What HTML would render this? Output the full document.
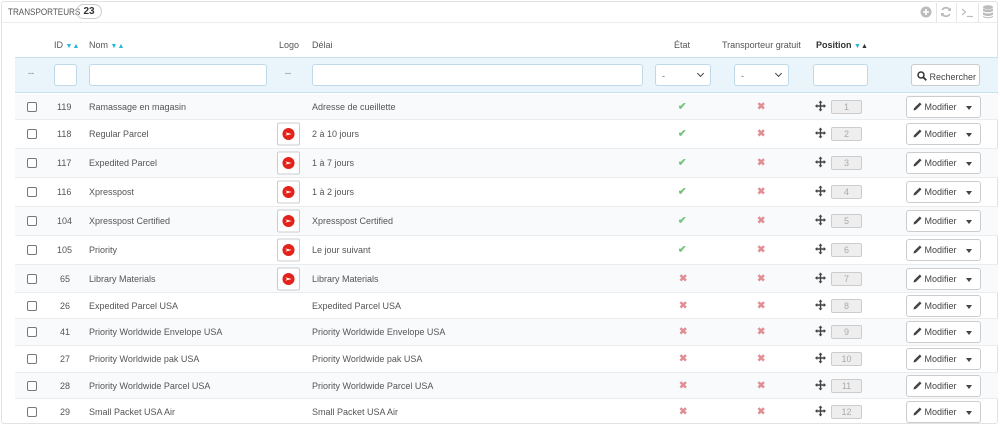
<!DOCTYPE html>
<html><head><meta charset="utf-8"><style>
*{box-sizing:border-box;margin:0;padding:0}
body{width:1000px;height:435px;background:#fff;font-family:"Liberation Sans",sans-serif;font-size:9px;color:#555;position:relative;overflow:hidden}
.a{position:absolute}
.panel{left:1px;top:1px;width:997px;height:423px;border:1px solid #dfe3e6;border-radius:3px}
.hdr{left:8px;top:7px;font-size:9px;color:#555;transform:scaleX(.9);transform-origin:left}
.badge{left:76px;top:4px;width:26px;height:15px;border:1px solid #ccc;border-radius:8px;font-size:10px;font-weight:bold;color:#333;text-align:center;line-height:13px}
.hline{left:2px;top:22px;width:996px;height:1px;background:#eaedef}
.th{top:40px;font-size:9px;color:#555}
.tri{font-size:7px;color:#25b9d7}
.filter{left:15px;top:57px;width:983px;height:36px;background:#eaf5fb;border-top:1px solid #c8e1ee;border-bottom:1px solid #c8e1ee}
.inp{position:absolute;top:6px;height:22px;background:#fff;border:1px solid #bfd9e8;border-radius:3px}
.sel{font-size:9px;padding:6px 0 0 6px;color:#666}
.sel:after{content:"";position:absolute;right:7px;top:6px;width:4px;height:4px;border-right:1.5px solid #444;border-bottom:1.5px solid #444;transform:rotate(45deg)}
.btn{position:absolute;background:#fff;border:1px solid #ccc;border-radius:3px;color:#444;font-size:9px}
.row{position:absolute;left:15px;width:983px;border-bottom:1px solid #eaedef}
.row.o{background:#f8fafc}
.row span{position:absolute;top:50%;transform:translateY(-50%);white-space:nowrap}
.cb{left:12px;width:10px;height:10px;border:1px solid #777;border-radius:2px;background:#fff}
.logo{left:262px;width:23px;height:23px;border:1px solid #ccc;border-radius:2px;background:#fff}
.logo svg{position:absolute;left:4px;top:4px}
.ok{color:#72c279;font-size:10px;font-weight:bold}
.no{color:#e08f95;font-size:10px;font-weight:bold}
.pos{left:816px;width:31px;height:14px;border:1px solid #ccc;background:#eee;border-radius:2px;color:#aaa;text-align:center;line-height:12px;font-size:9px}
.mv{left:800px}
.mod{left:891px;width:75px;height:22px;border:1px solid #ccc;border-radius:3px;background:#fff}
.mod b{position:absolute;left:6px;top:5px;font-weight:normal;color:#444;font-size:9px}
.mod b svg{vertical-align:-1px}
.mod em{position:absolute;right:8px;top:9px;width:0;height:0;border-left:3.5px solid transparent;border-right:3.5px solid transparent;border-top:4px solid #444}
</style></head><body>
<svg width="0" height="0" style="position:absolute"><defs>
<symbol id="lg" viewBox="0 0 14 14"><circle cx="7" cy="7" r="6.5" fill="#e3231b"/><path d="M3.5 5.2 L10.5 7 L3.5 8.8 L5.5 7 Z" fill="#fff"/></symbol>
<symbol id="mvi" viewBox="0 0 12 12"><path d="M6 0 L8.2 2.5 H6.8 V5.2 H9.5 V3.8 L12 6 L9.5 8.2 V6.8 H6.8 V9.5 H8.2 L6 12 L3.8 9.5 H5.2 V6.8 H2.5 V8.2 L0 6 L2.5 3.8 V5.2 H5.2 V2.5 H3.8 Z" fill="#444"/></symbol>
<symbol id="pen" viewBox="0 0 10 10"><path d="M7.5 0.5 L9.5 2.5 L3.2 8.8 L0.5 9.5 L1.2 6.8 Z" fill="#444"/></symbol>
</defs></svg>
<div class="a panel"></div>
<div class="a hdr">TRANSPORTEURS</div>
<div class="a badge">23</div>
<div class="a hline"></div>
<div class="a" style="left:916px;top:3px;width:82px;height:19px">
<svg class="a" style="left:4px;top:3px" width="12" height="12" viewBox="0 0 12 12"><circle cx="6" cy="6" r="5.5" fill="#bbb"/><path d="M6 3v6M3 6h6" stroke="#fff" stroke-width="1.6"/></svg>
<span class="a" style="left:20px;top:0;border-left:1px solid #e5e5e5;height:19px"></span>
<svg class="a" style="left:24px;top:3px" width="12" height="12" viewBox="0 0 12 12"><path d="M10 4.5A4.3 4.3 0 0 0 2.2 4M2 7.5A4.3 4.3 0 0 0 9.8 8" stroke="#bbb" stroke-width="1.8" fill="none"/><path d="M11 1.5V5H7.5Z M1 10.5V7H4.5Z" fill="#bbb"/></svg>
<span class="a" style="left:40px;top:0;border-left:1px solid #e5e5e5;height:19px"></span>
<svg class="a" style="left:45px;top:4px" width="13" height="11" viewBox="0 0 13 11"><path d="M1 2L4.5 5L1 8" stroke="#bbb" stroke-width="1.2" fill="none"/><path d="M6 9.5H12" stroke="#bbb" stroke-width="1.2"/></svg>
<span class="a" style="left:62px;top:0;border-left:1px solid #e5e5e5;height:19px"></span>
<svg class="a" style="left:67px;top:2px" width="10" height="14" viewBox="0 0 10 14"><ellipse cx="5" cy="2.2" rx="5" ry="2" fill="#bbb"/><path d="M0 3.5Q5 6 10 3.5V6Q5 8.5 0 6Z M0 7.3Q5 9.8 10 7.3V9.8Q5 12.3 0 9.8Z M0 11Q5 13.5 10 11V12Q5 14.5 0 12Z" fill="#bbb"/></svg>
</div>
<div class="a th" style="left:54px">ID <span class="tri">&#9660;&#9650;</span></div>
<div class="a th" style="left:89px">Nom <span class="tri">&#9660;&#9650;</span></div>
<div class="a th" style="left:279px">Logo</div>
<div class="a th" style="left:312px">Délai</div>
<div class="a th" style="left:674px">État</div>
<div class="a th" style="left:722px">Transporteur gratuit</div>
<div class="a th" style="left:816px;font-weight:bold;color:#333">Position <span class="tri">&#9660;</span><span style="font-size:7px;color:#333">&#9650;</span></div>
<div class="a filter">
<span style="position:absolute;left:13px;top:10px;color:#777">--</span>
<div class="inp" style="left:39px;width:23px"></div>
<div class="inp" style="left:74px;width:178px"></div>
<span style="position:absolute;left:270px;top:10px;color:#777">--</span>
<div class="inp" style="left:297px;width:331px"></div>
<div class="inp sel" style="left:640px;width:56px">-</div>
<div class="inp sel" style="left:719px;width:55px">-</div>
<div class="inp" style="left:798px;width:55px"></div>
<div class="btn" style="left:896px;top:6px;width:69px;height:22px;padding:6px 0 0 5px"><svg width="10" height="10" viewBox="0 0 10 10" style="vertical-align:-1px"><circle cx="4" cy="4" r="3" stroke="#333" stroke-width="1.5" fill="none"/><path d="M6.2 6.2L9.3 9.3" stroke="#333" stroke-width="1.8"/></svg> Rechercher</div>
</div>
<div class="row o" style="top:94px;height:26px"><span class="cb"></span><span style="left:42px">119</span><span style="left:74px">Ramassage en magasin</span><span style="left:297px">Adresse de cueillette</span><span class="ok" style="left:663px">&#10004;</span><span class="no" style="left:742px">&#10006;</span><span class="mv"><svg width="11" height="11"><use href="#mvi"/></svg></span><span class="pos">1</span><span class="mod"><b><svg width="9" height="9"><use href="#pen"/></svg> Modifier</b><em></em></span></div>
<div class="row" style="top:120px;height:29px"><span class="cb"></span><span style="left:42px">118</span><span style="left:74px">Regular Parcel</span><span class="logo"><svg width="13" height="13"><use href="#lg"/></svg></span><span style="left:297px">2 à 10 jours</span><span class="ok" style="left:663px">&#10004;</span><span class="no" style="left:742px">&#10006;</span><span class="mv"><svg width="11" height="11"><use href="#mvi"/></svg></span><span class="pos">2</span><span class="mod"><b><svg width="9" height="9"><use href="#pen"/></svg> Modifier</b><em></em></span></div>
<div class="row o" style="top:149px;height:29px"><span class="cb"></span><span style="left:42px">117</span><span style="left:74px">Expedited Parcel</span><span class="logo"><svg width="13" height="13"><use href="#lg"/></svg></span><span style="left:297px">1 à 7 jours</span><span class="ok" style="left:663px">&#10004;</span><span class="no" style="left:742px">&#10006;</span><span class="mv"><svg width="11" height="11"><use href="#mvi"/></svg></span><span class="pos">3</span><span class="mod"><b><svg width="9" height="9"><use href="#pen"/></svg> Modifier</b><em></em></span></div>
<div class="row" style="top:178px;height:29px"><span class="cb"></span><span style="left:42px">116</span><span style="left:74px">Xpresspost</span><span class="logo"><svg width="13" height="13"><use href="#lg"/></svg></span><span style="left:297px">1 à 2 jours</span><span class="ok" style="left:663px">&#10004;</span><span class="no" style="left:742px">&#10006;</span><span class="mv"><svg width="11" height="11"><use href="#mvi"/></svg></span><span class="pos">4</span><span class="mod"><b><svg width="9" height="9"><use href="#pen"/></svg> Modifier</b><em></em></span></div>
<div class="row o" style="top:207px;height:29px"><span class="cb"></span><span style="left:42px">104</span><span style="left:74px">Xpresspost Certified</span><span class="logo"><svg width="13" height="13"><use href="#lg"/></svg></span><span style="left:297px">Xpresspost Certified</span><span class="ok" style="left:663px">&#10004;</span><span class="no" style="left:742px">&#10006;</span><span class="mv"><svg width="11" height="11"><use href="#mvi"/></svg></span><span class="pos">5</span><span class="mod"><b><svg width="9" height="9"><use href="#pen"/></svg> Modifier</b><em></em></span></div>
<div class="row" style="top:236px;height:29px"><span class="cb"></span><span style="left:42px">105</span><span style="left:74px">Priority</span><span class="logo"><svg width="13" height="13"><use href="#lg"/></svg></span><span style="left:297px">Le jour suivant</span><span class="ok" style="left:663px">&#10004;</span><span class="no" style="left:742px">&#10006;</span><span class="mv"><svg width="11" height="11"><use href="#mvi"/></svg></span><span class="pos">6</span><span class="mod"><b><svg width="9" height="9"><use href="#pen"/></svg> Modifier</b><em></em></span></div>
<div class="row o" style="top:265px;height:28px"><span class="cb"></span><span style="left:45px">65</span><span style="left:74px">Library Materials</span><span class="logo"><svg width="13" height="13"><use href="#lg"/></svg></span><span style="left:297px">Library Materials</span><span class="no" style="left:664px">&#10006;</span><span class="no" style="left:742px">&#10006;</span><span class="mv"><svg width="11" height="11"><use href="#mvi"/></svg></span><span class="pos">7</span><span class="mod"><b><svg width="9" height="9"><use href="#pen"/></svg> Modifier</b><em></em></span></div>
<div class="row" style="top:293px;height:26px"><span class="cb"></span><span style="left:45px">26</span><span style="left:74px">Expedited Parcel USA</span><span style="left:297px">Expedited Parcel USA</span><span class="no" style="left:664px">&#10006;</span><span class="no" style="left:742px">&#10006;</span><span class="mv"><svg width="11" height="11"><use href="#mvi"/></svg></span><span class="pos">8</span><span class="mod"><b><svg width="9" height="9"><use href="#pen"/></svg> Modifier</b><em></em></span></div>
<div class="row o" style="top:319px;height:27px"><span class="cb"></span><span style="left:45px">41</span><span style="left:74px">Priority Worldwide Envelope USA</span><span style="left:297px">Priority Worldwide Envelope USA</span><span class="no" style="left:664px">&#10006;</span><span class="no" style="left:742px">&#10006;</span><span class="mv"><svg width="11" height="11"><use href="#mvi"/></svg></span><span class="pos">9</span><span class="mod"><b><svg width="9" height="9"><use href="#pen"/></svg> Modifier</b><em></em></span></div>
<div class="row" style="top:346px;height:27px"><span class="cb"></span><span style="left:45px">27</span><span style="left:74px">Priority Worldwide pak USA</span><span style="left:297px">Priority Worldwide pak USA</span><span class="no" style="left:664px">&#10006;</span><span class="no" style="left:742px">&#10006;</span><span class="mv"><svg width="11" height="11"><use href="#mvi"/></svg></span><span class="pos">10</span><span class="mod"><b><svg width="9" height="9"><use href="#pen"/></svg> Modifier</b><em></em></span></div>
<div class="row o" style="top:373px;height:26px"><span class="cb"></span><span style="left:45px">28</span><span style="left:74px">Priority Worldwide Parcel USA</span><span style="left:297px">Priority Worldwide Parcel USA</span><span class="no" style="left:664px">&#10006;</span><span class="no" style="left:742px">&#10006;</span><span class="mv"><svg width="11" height="11"><use href="#mvi"/></svg></span><span class="pos">11</span><span class="mod"><b><svg width="9" height="9"><use href="#pen"/></svg> Modifier</b><em></em></span></div>
<div class="row" style="top:399px;height:26px;border-bottom:none"><span class="cb"></span><span style="left:45px">29</span><span style="left:74px">Small Packet USA Air</span><span style="left:297px">Small Packet USA Air</span><span class="no" style="left:664px">&#10006;</span><span class="no" style="left:742px">&#10006;</span><span class="mv"><svg width="11" height="11"><use href="#mvi"/></svg></span><span class="pos">12</span><span class="mod"><b><svg width="9" height="9"><use href="#pen"/></svg> Modifier</b><em></em></span></div>
</body></html>
